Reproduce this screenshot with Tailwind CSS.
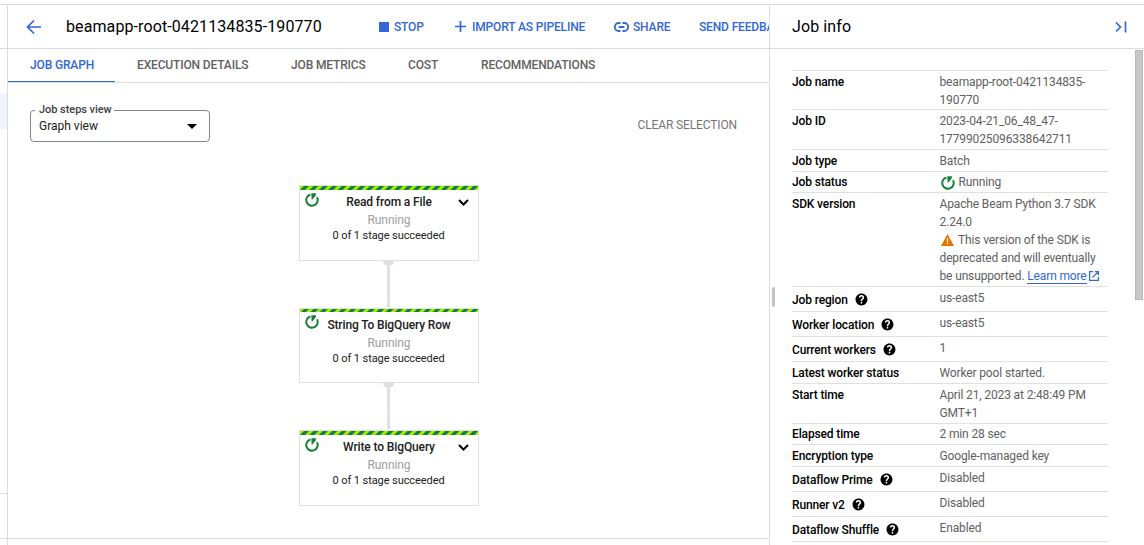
<!DOCTYPE html>
<html lang="en">
<head>
<meta charset="utf-8">
<title>Job graph</title>
<script src="https://cdn.jsdelivr.net/npm/@tailwindcss/browser@4"></script>
</head>
<body class="h-[545px] w-[1144px] overflow-hidden bg-white pt-1 font-['Roboto','Liberation_Sans',sans-serif] text-xs text-black">
<svg class="absolute size-0">
  <symbol id="run" viewBox="0 0 14 14"><path d="M5.400 1.500A5.700 5.700 0 1 0 12 4.300" fill="none" stroke="#1a8038" stroke-width="2"/><path d="M6.300 .3h5L10.300 3 6.700 7.200z" fill="#1a8038"/></symbol>
  <symbol id="help" viewBox="0 0 24 24"><path d="M12 1C5.900 1 1 5.900 1 12s4.900 11 11 11 11-4.900 11-11S18.100 1 12 1zm1.300 18.500h-2.800v-2.700h2.800zm2.500-8.500-1.200 1.200c-.9.900-1.300 1.500-1.300 3h-2.800v-.7c0-1.200.5-2.300 1.300-3.100l1.500-1.500c.4-.4.700-.9.700-1.500a2.100 2.100 0 0 0-4.200 0H7a4.900 4.900 0 0 1 9.800 0c0 1-.4 2-1 2.600z"/></symbol>
  <pattern id="stripe" width="9.400" height="4" patternUnits="userSpaceOnUse"><path fill="#aeea00" d="M0 0h9.400v4H0z"/><path fill="#0b8043" d="M4 0h5L5 4H0z"/></pattern>
</svg>
<div class="flex h-[541px] border-t border-[#dadce0]">
  <aside class="flex w-2 shrink-0 flex-col border-r border-[#dadce0]">
    <div class="h-11 border-b border-[#dadce0]"></div>
    <div class="mt-11 h-9 bg-[#f0f4ff]"></div>
    <div class="mt-[364px] h-[45px] border-t border-[#dadce0]"></div>
    <div class="grow border-t border-[#dadce0]"></div>
  </aside>
  <main class="flex w-[761px] shrink-0 flex-col overflow-hidden">
    <header class="flex h-11 shrink-0 items-center border-b border-[#dadce0] pl-[18px] whitespace-nowrap">
      <svg class="size-4 shrink-0" viewBox="0 0 16 16" fill="none" stroke="#3367d6" stroke-width="1.700"><path d="M15 8H2M8 1.500 1.500 8 8 14.500"/></svg>
      <h1 class="ml-6 w-[313px] shrink-0 text-base tracking-[0.1px]">beamapp-root-0421134835-190770</h1>
      <div class="flex shrink-0 items-center font-medium tracking-[-0.15px] text-[#3367d6]">
        <span class="size-[10px] bg-[#3367d6]"></span><span class="ml-[5px] w-[61px]">STOP</span>
        <svg class="size-[11px]" viewBox="0 0 11 11" stroke="#3367d6" stroke-width="1.700"><path d="M5.500 0v11M0 5.500h11"/></svg><span class="ml-1.5 w-[142px]">IMPORT AS PIPELINE</span>
        <svg class="h-[10px] w-[15px]" viewBox="0 0 15 10" fill="none" stroke="#3367d6" stroke-width="1.800"><path d="M6.500 1H4.800a4 4 0 0 0 0 8h1.700M8.500 1h1.700a4 4 0 0 1 0 8H8.500M4.700 5h5.600"/></svg><span class="ml-1 w-[66px]">SHARE</span>
        <span>SEND FEEDBACK</span>
      </div>
    </header>
    <nav class="flex h-[34px] shrink-0 border-b border-[#dadce0] leading-8 font-medium tracking-[-0.15px] text-[#616161]">
      <span class="h-[33px] w-[107px] border-b border-[#3367d6] pl-[22px] text-[#3367d6]">JOB GRAPH</span>
      <span class="w-[154px] pl-[22px]">EXECUTION DETAILS</span>
      <span class="w-[117px] pl-[22px]">JOB METRICS</span>
      <span class="w-[73px] pl-[22px]">COST</span>
      <span class="pl-[22px]">RECOMMENDATIONS</span>
    </nav>
    <section class="flex h-[102px] shrink-0 items-start justify-between pt-[27px] pr-8 pl-[22px]">
      <div class="relative flex h-8 w-[180px] items-center justify-between rounded border border-[#80868b] pr-3 pl-2">
        <span class="absolute -top-[9px] left-1 bg-white pr-[2px] pl-1 text-[11px] leading-4 font-medium tracking-[-0.05px] text-[#3c4043]">Job steps view</span>
        <span class="text-[#212121]">Graph view</span>
        <svg class="h-[5px] w-[10px]" viewBox="0 0 10 5"><path d="M0 0h10L5 5z"/></svg>
      </div>
      <span class="mt-[7px] tracking-[-0.13px] text-[#757575]">CLEAR SELECTION</span>
    </section>
    <section class="flex h-[354px] shrink-0 flex-col items-center border-b border-[#dadce0] pl-px">
      <div class="h-[76px] w-[180px] border border-[#e0e0e0] text-center">
        <svg class="block h-1 w-full"><rect width="100%" height="4" fill="url(#stripe)"/></svg>
        <div class="relative h-5 pt-1">
          <svg class="absolute top-[3px] left-[5px] size-[14px]"><use href="#run"/></svg><span class="font-medium tracking-[-0.12px] text-[#212121]">Read from a File</span>
          <svg class="absolute top-[9px] right-[9px] h-[7px] w-[11px]" viewBox="0 0 11 7" fill="none" stroke="#000" stroke-width="2"><path d="M1 1l4.500 4.500L10 1"/></svg>
        </div>
        <p class="mt-[2px] tracking-[-0.1px] text-[#9e9e9e]">Running</p><p class="pr-px text-[11px] leading-4 tracking-[-0.08px] text-[#212121]">0 of 1 stage succeeded</p>
      </div>
      <div class="flex h-[47px] flex-col items-center pr-px"><i class="h-[5px] w-[11px] rounded-b-full bg-[#e0e0e0]"></i><i class="h-[41px] w-[3px] bg-[#e0e0e0]"></i></div>
      <div class="h-[75px] w-[180px] border border-[#e0e0e0] text-center">
        <svg class="block h-[3px] w-full"><rect width="100%" height="4" fill="url(#stripe)"/></svg>
        <div class="relative h-[21px] pt-[5px]">
          <svg class="absolute top-[3px] left-[5px] size-[14px]"><use href="#run"/></svg><span class="font-medium tracking-[-0.14px] text-[#212121]">String To BigQuery Row</span>
        </div>
        <p class="mt-[2px] tracking-[-0.1px] text-[#9e9e9e]">Running</p><p class="pr-px text-[11px] leading-4 tracking-[-0.08px] text-[#212121]">0 of 1 stage succeeded</p>
      </div>
      <div class="flex h-[47px] flex-col items-center pr-px"><i class="h-[5px] w-[11px] rounded-b-full bg-[#e0e0e0]"></i><i class="h-[41px] w-[3px] bg-[#e0e0e0]"></i></div>
      <div class="h-[76px] w-[180px] border border-[#e0e0e0] text-center">
        <svg class="block h-1 w-full"><rect width="100%" height="4" fill="url(#stripe)"/></svg>
        <div class="relative h-5 pt-1">
          <svg class="absolute top-[3px] left-[5px] size-[14px]"><use href="#run"/></svg><span class="font-medium tracking-[-0.12px] text-[#212121]">Write to BigQuery</span>
          <svg class="absolute top-[9px] right-[9px] h-[7px] w-[11px]" viewBox="0 0 11 7" fill="none" stroke="#000" stroke-width="2"><path d="M1 1l4.500 4.500L10 1"/></svg>
        </div>
        <p class="mt-[2px] tracking-[-0.1px] text-[#9e9e9e]">Running</p><p class="pr-px text-[11px] leading-4 tracking-[-0.08px] text-[#212121]">0 of 1 stage succeeded</p>
      </div>
    </section>
  </main>
  <aside class="relative flex w-[375px] shrink-0 flex-col border-l border-[#dadce0]">
    <header class="flex h-11 shrink-0 items-center justify-between border-b border-[#dadce0] pr-[17px] pl-[22px]">
      <h2 class="text-base tracking-[0.1px]">Job info</h2>
      <svg class="h-3 w-[12px]" viewBox="0 0 12 12" fill="none" stroke="#3367d6" stroke-width="1.700"><path d="M1 1.500 5.500 6 1 10.500M10.500 .5v11"/></svg>
    </header>
    <i class="absolute top-[282px] left-[2px] h-5 w-[3px] rounded-full bg-[#c4c4c4]"></i>
    <div class="flex">
    <dl class="mt-[21px] ml-[22px] w-[316px] border-t border-[#e0e0e0] leading-[18px] tracking-[-0.14px] text-[#616161] [&_dt]:w-[147.500px] [&_dt]:font-medium [&_dt]:text-black [&>div]:flex [&>div]:border-b [&>div]:border-[#e0e0e0] [&>div]:pt-[2px] [&_dt]:shrink-0">
      <div class="h-[39px]"><dt>Job name</dt><dd>beamapp-root-0421134835-<br>190770</dd></div>
      <div class="h-[40px]"><dt>Job ID</dt><dd class="tracking-[-0.12px]">2023-04-21_06_48_47-<br>17799025096338642711</dd></div>
      <div class="h-[22px]"><dt>Job type</dt><dd>Batch</dd></div>
      <div class="h-[21px]"><dt class="-mt-px">Job status</dt><dd class="-mt-px flex"><svg class="mt-[3px] mr-[4px] ml-[1px] size-[14px]"><use href="#run"/></svg>Running</dd></div>
      <div class="h-[94px]"><dt>SDK version</dt><dd class="whitespace-nowrap">Apache Beam Python 3.7 SDK<br>2.24.0<br><svg class="mr-[4px] ml-[1.500px] inline h-3 w-[13px] align-[-2px]" viewBox="0 0 13 12"><path fill="#e37400" d="M6.500 0 13 12H0z"/><path stroke="#fff" stroke-width="1.300" d="M6.500 4.300v3.400M6.500 8.800v1.300"/></svg>This version of the SDK is<br>deprecated and will eventually<br>be unsupported. <a class="inline-block h-[17px] border-b border-[#3367d6] text-[#3367d6]">Learn more</a><svg class="ml-[2px] inline size-[10px] align-[-1px]" viewBox="0 0 10 10" fill="none" stroke="#3367d6" stroke-width="1.200"><path d="M4 .6H.6v8.800h8.800V6M5.800 .6h3.600v3.600M9.400 .6 3.500 6.500"/></svg></dd></div>
      <div class="h-[25px]"><dt class="flex pt-[2px]">Job region<svg class="mt-[2px] ml-[7px] size-[13px]"><use href="#help"/></svg></dt><dd>us-east5</dd></div>
      <div class="h-[25px]"><dt class="flex pt-[2px]">Worker location<svg class="mt-[2px] ml-[7px] size-[13px]"><use href="#help"/></svg></dt><dd>us-east5</dd></div>
      <div class="h-[25px]"><dt class="flex pt-[2px]">Current workers<svg class="mt-[2px] ml-[7px] size-[13px]"><use href="#help"/></svg></dt><dd>1</dd></div>
      <div class="h-[22px]"><dt>Latest worker status</dt><dd>Worker pool started.</dd></div>
      <div class="h-[40px]"><dt>Start time</dt><dd>April 21, 2023 at 2:48:49 PM<br>GMT+1</dd></div>
      <div class="h-[21px]"><dt class="-mt-px">Elapsed time</dt><dd class="-mt-px">2 min 28 sec</dd></div>
      <div class="h-[22px]"><dt>Encryption type</dt><dd>Google-managed key</dd></div>
      <div class="h-[25px]"><dt class="flex pt-[2px]">Dataflow Prime<svg class="mt-[2px] ml-[7px] size-[13px]"><use href="#help"/></svg></dt><dd>Disabled</dd></div>
      <div class="h-[25px]"><dt class="flex pt-[2px]">Runner v2<svg class="mt-[2px] ml-[7px] size-[13px]"><use href="#help"/></svg></dt><dd>Disabled</dd></div>
      <div class="h-[25px]"><dt class="flex pt-[2px]">Dataflow Shuffle<svg class="mt-[2px] ml-[7px] size-[13px]"><use href="#help"/></svg></dt><dd>Enabled</dd></div>
    </dl>
    <div class="mt-px ml-[27px] h-[250px] w-2 border border-[#b8b8b8] bg-[#c8c8c8]"></div>
    </div>
  </aside>
</div>
</body>
</html>
